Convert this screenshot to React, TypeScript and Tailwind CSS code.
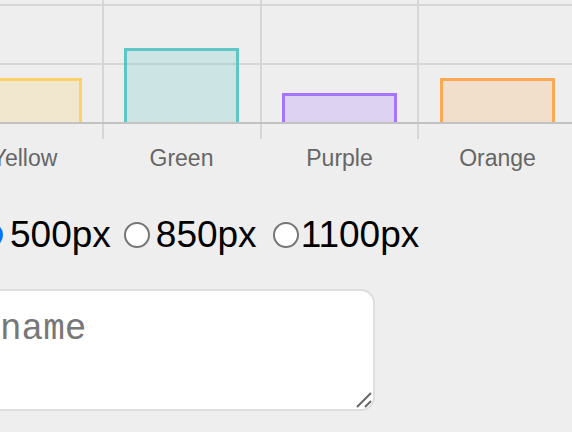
import React from 'react'

const BARS = [
  { label: 'Yellow', x: -33, top: 78, color: 'rgb(255,205,86)' },
  { label: 'Green', x: 124, top: 48, color: 'rgb(75,192,192)' },
  { label: 'Purple', x: 282, top: 93, color: 'rgb(153,102,255)' },
  { label: 'Orange', x: 440, top: 78, color: 'rgb(255,159,64)' },
]
const BAR_W = 115
const BASE = 123
const GRID = '#d6d6d6'

function BarChart() {
  return (
    <svg width={572} height={180} className="block">
      {/* grid */}
      <line x1={0} x2={572} y1={5} y2={5} stroke={GRID} strokeWidth={2} />
      <line x1={0} x2={572} y1={64} y2={64} stroke={GRID} strokeWidth={2} />
      {[103, 261, 418].map((x) => (
        <line key={x} x1={x} x2={x} y1={0} y2={139} stroke={GRID} strokeWidth={2} />
      ))}

      {/* bars */}
      {BARS.map((b) => (
        <g key={b.label}>
          <rect x={b.x} y={b.top} width={BAR_W} height={BASE - b.top} fill={b.color} fillOpacity={0.2} />
          <path
            d={`M${b.x + 1.5} ${BASE} V${b.top + 1.5} H${b.x + BAR_W - 1.5} V${BASE}`}
            fill="none"
            stroke={b.color}
            strokeOpacity={0.85}
            strokeWidth={3}
          />
        </g>
      ))}

      <line x1={0} x2={572} y1={BASE} y2={BASE} stroke="#c2c2c2" strokeWidth={2} />

      {/* labels */}
      {BARS.map((b) => (
        <text
          key={b.label}
          x={b.x + BAR_W / 2}
          y={166}
          textAnchor="middle"
          fill="#666666"
          fontSize={23}
          fontFamily="'Liberation Sans', Arial, sans-serif"
        >
          {b.label}
        </text>
      ))}
    </svg>
  )
}

function Radio({ checked }: { checked?: boolean }) {
  return checked ? (
    <span className="block w-[26px] h-[26px] rounded-full bg-[#0075ff] flex items-center justify-center shrink-0">
      <span className="block w-[14px] h-[14px] rounded-full bg-white" />
    </span>
  ) : (
    <span className="block w-[26px] h-[26px] rounded-full border-2 border-[#767676] bg-white shrink-0" />
  )
}

export default function App() {
  return (
    <div className="w-full h-screen overflow-hidden bg-[#eeeeee] font-['Liberation_Sans',Arial,sans-serif]">
      <BarChart />

      {/* width options */}
      <div className="mt-[34px] flex items-center text-[37px] text-black leading-[41px] whitespace-nowrap">
        <span className="-ml-[23px]"><Radio checked /></span>
        <span className="ml-[7px]">500px</span>
        <span className="ml-[13px]"><Radio /></span>
        <span className="ml-[6px]">850px</span>
        <span className="ml-[16px]"><Radio /></span>
        <span className="ml-[2px]">1100px</span>
      </div>

      {/* name box */}
      <div className="mt-[34px] relative -ml-[140px] w-[515px]">
        <textarea
          placeholder="Your name"
          className="block w-full h-[122px] resize-none rounded-[14px] border-2 border-[#dedede] bg-white pl-[30px] pt-[18px] text-[36px] leading-[41px] font-['Liberation_Mono','Courier_New',monospace] placeholder:text-[#777777] outline-none"
        />
        <svg className="absolute right-[2px] bottom-[2px]" width={18} height={18} viewBox="0 0 18 18">
          <line x1={2} y1={16} x2={16} y2={2} stroke="#666" strokeWidth={2} />
          <line x1={10} y1={16} x2={16} y2={10} stroke="#666" strokeWidth={2} />
        </svg>
      </div>
    </div>
  )
}
